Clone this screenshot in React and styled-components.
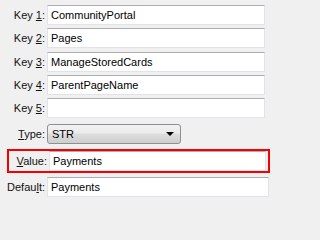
import styled, { createGlobalStyle } from "styled-components";

const GlobalStyle = createGlobalStyle`
  html, body {
    margin: 0;
    padding: 0;
    background: #f0f0f0;
    min-height: 100%;
  }
  body {
    font-family: "Liberation Sans", Arial, sans-serif;
    font-size: 11px;
    color: #000;
  }
`;

const Form = styled.div`
  width: 271px;
  height: 201px;
  box-sizing: border-box;
  padding: 5px 0 0 0;
  display: flex;
  flex-direction: column;
  background: #f0f0f0;
`;

const Row = styled.div`
  display: flex;
  align-items: center;
  height: ${(p) => p.$height || 20}px;
  margin-top: ${(p) => p.$top || 0}px;
  padding-right: ${(p) => p.$right || 6}px;
`;

const Label = styled.label`
  width: 47px;
  flex: none;
  text-align: right;
  padding-right: 2px;
  box-sizing: border-box;
  white-space: nowrap;
  color: #101010;

  & u {
    text-decoration: underline;
  }
`;

const Input = styled.div`
  flex: 1;
  height: 20px;
  box-sizing: border-box;
  background: #fff;
  border: 1px solid #e2e3ea;
  border-top-color: #abadb3;
  padding: 0 3px;
  display: flex;
  align-items: center;
  color: #000;
  white-space: nowrap;
  overflow: hidden;
`;

const Highlight = styled.div`
  display: flex;
  align-items: center;
  height: 24px;
  margin: 5px 1px 0 7px;
  border: 2px solid #f40000;
  box-sizing: border-box;
  padding-right: 2px;

  & ${Label} {
    width: 40px;
  }
`;

const Select = styled.div`
  width: 134px;
  height: 20px;
  box-sizing: border-box;
  border: 1px solid #8e8f8f;
  border-radius: 3px;
  background: linear-gradient(#f2f2f2 0%, #ebebeb 45%, #dddddd 50%, #cfcfcf 100%);
  display: flex;
  align-items: center;
  justify-content: space-between;
  padding: 0 6px 0 4px;
`;

const Arrow = styled.span`
  width: 0;
  height: 0;
  border-left: 4px solid transparent;
  border-right: 4px solid transparent;
  border-top: 4px solid #000;
`;

const keys = [
  { n: "1", value: "CommunityPortal", top: 0 },
  { n: "2", value: "Pages", top: 3 },
  { n: "3", value: "ManageStoredCards", top: 4 },
  { n: "4", value: "ParentPageName", top: 3 },
  { n: "5", value: "", top: 3 },
];

const App = () => (
  <>
    <GlobalStyle />
    <Form>
      {keys.map((k) => (
        <Row key={k.n} $top={k.top} $right={6}>
          <Label>
            Key <u>{k.n}</u>:
          </Label>
          <Input>{k.value}</Input>
        </Row>
      ))}
      <Row $top={6} $height={20}>
        <Label>
          <u>T</u>ype:
        </Label>
        <Select>
          <span>STR</span>
          <Arrow />
        </Select>
      </Row>
      <Highlight>
        <Label>
          <u>V</u>alue:
        </Label>
        <Input>Payments</Input>
      </Highlight>
      <Row $top={4} $right={2}>
        <Label>
          Defau<u>l</u>t:
        </Label>
        <Input>Payments</Input>
      </Row>
    </Form>
  </>
);

export default App;
